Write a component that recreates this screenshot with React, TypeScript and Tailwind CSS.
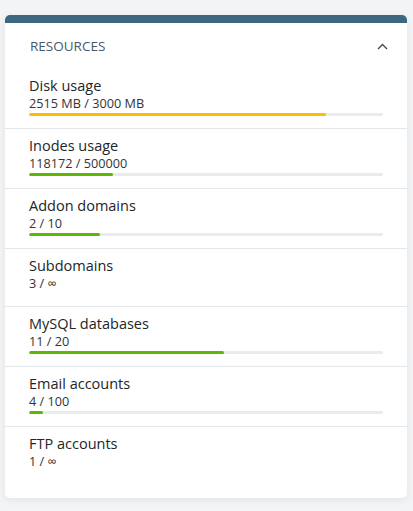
import React from "react";

type Row = { title: string; value: string; pct?: number; color?: string };

const rows: Row[] = [
  { title: "Disk usage", value: "2515 MB / 3000 MB", pct: (2515 / 3000) * 100, color: "bg-[#fbbf00]" },
  { title: "Inodes usage", value: "118172 / 500000", pct: (118172 / 500000) * 100, color: "bg-[#5cb800]" },
  { title: "Addon domains", value: "2 / 10", pct: 20, color: "bg-[#5cb800]" },
  { title: "Subdomains", value: "3 / ∞" },
  { title: "MySQL databases", value: "11 / 20", pct: 55, color: "bg-[#5cb800]" },
  { title: "Email accounts", value: "4 / 100", pct: 4, color: "bg-[#5cb800]" },
  { title: "FTP accounts", value: "1 / ∞" },
];

export default function App() {
  return (
    <div
      className="min-h-[511px] w-[413px] bg-[#f2f4f5] pt-[15px] px-[5px]"
      style={{ fontFamily: '"Open Sans", "Noto Sans", sans-serif' }}
    >
      <div className="w-[402px] bg-white rounded-[5px] overflow-hidden shadow-[0_2px_8px_rgba(0,0,0,0.07)] pb-[14px]">
        <div className="h-[8px] bg-[#3d6680]" />
        <div className="h-[46px] flex items-center justify-between pl-[25px] pr-[19px]">
          <span className="text-[13.5px] leading-[18px] text-[#475869]">RESOURCES</span>
          <svg width="11" height="7" viewBox="0 0 11 7">
            <polyline points="1,6 5.5,1.5 10,6" fill="none" stroke="#3f4c5a" strokeWidth="1.4" />
          </svg>
        </div>
        {rows.map((r, i) => (
          <div
            key={r.title}
            className={`px-[24px] pt-[7px] ${i > 0 ? "border-t border-[#e3e7ea]" : ""} ${
              r.pct !== undefined ? "pb-[12px]" : "pb-[14px]"
            }`}
          >
            <div className="text-[14.5px] leading-[19px] text-[#222528]">{r.title}</div>
            <div className="text-[12.7px] leading-[17px] text-[#303438]">{r.value}</div>
            {r.pct !== undefined && (
              <div className="mt-[1px] h-[3px] w-[354px] rounded-full bg-[#e9ecef] overflow-hidden">
                <div className={`h-full rounded-full ${r.color}`} style={{ width: `${r.pct}%` }} />
              </div>
            )}
          </div>
        ))}
      </div>
    </div>
  );
}
